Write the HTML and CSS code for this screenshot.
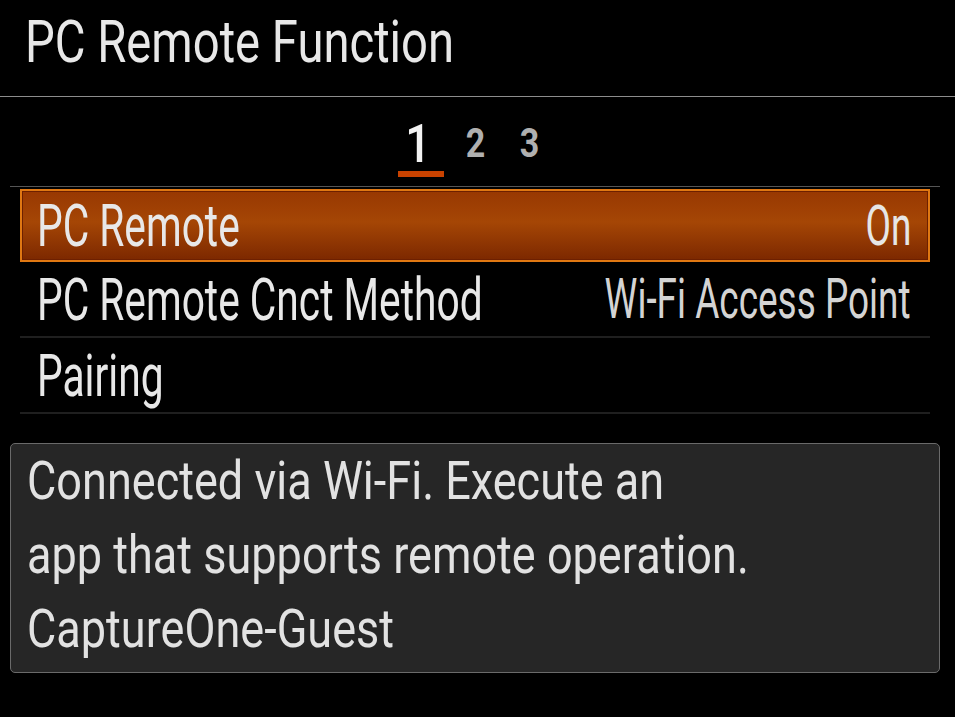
FILE: index.html
```html
<!DOCTYPE html>
<html>
<head>
    <title>PC Remote Function</title>
    <link rel="stylesheet" href="styles.css">
</head>
<body>
    <div class="screen">
        <div class="menu-header">
            <span class="txt title">PC Remote Function</span>
        </div>
        <div class="page-tabs">
            <span class="tab active"><span class="txt">1</span></span>
            <span class="tab"><span class="txt">2</span></span>
            <span class="tab"><span class="txt">3</span></span>
        </div>
        <div class="menu-list">
            <div class="menu-row selected">
                <span class="txt label">PC Remote</span>
                <span class="txt value">On</span>
            </div>
            <div class="menu-row">
                <span class="txt label">PC Remote Cnct Method</span>
                <span class="txt value">Wi-Fi Access Point</span>
            </div>
            <div class="menu-row">
                <span class="txt label">Pairing</span>
            </div>
        </div>
        <!-- Help text for the selected item -->
        <div class="info-box">
            <div class="info-line"><span class="txt">Connected via Wi-Fi. Execute an</span></div>
            <div class="info-line"><span class="txt">app that supports remote operation.</span></div>
            <div class="info-line"><span class="txt">CaptureOne-Guest</span></div>
        </div>
    </div>
</body>
</html>
```

FILE: styles.css
```css
/* Camera menu screen */
body {
    margin: 0;
    padding: 0;
    background-color: #000;
    font-family: Roboto, "Liberation Sans", sans-serif;
    color: #e8e8e8;
}

.screen {
    width: 955px;
    height: 717px;
    overflow: hidden;
    background-color: #000;
}

/* condensed look: the camera font is narrow */
.txt {
    display: inline-block;
    transform: scaleX(0.8);
    transform-origin: left center;
    white-space: nowrap;
}

.menu-header {
    height: 97px;
    border-bottom: 1px solid #8c8c8c;
    padding-left: 25px;
    box-sizing: border-box;
    display: flex;
    align-items: center;
    padding-bottom: 14px;
}

.title {
    font-size: 59px;
    line-height: 1;
}

.page-tabs {
    height: 89px;
    display: flex;
    justify-content: flex-start;
    align-items: flex-end;
    gap: 8px;
    padding-left: 398px;
    padding-bottom: 9px;
    box-sizing: border-box;
}

.tab {
    width: 46px;
    display: flex;
    justify-content: center;
    font-size: 40px;
    line-height: 1;
    font-weight: bold;
    color: #b0b0b0;
    padding-bottom: 13px;
}

.tab .txt {
    transform: scaleX(0.85);
    transform-origin: center center;
}

.tab.active {
    font-size: 53px;
    font-weight: 500;
    color: #f2f2f2;
    border-bottom: 6px solid #c84200;
    padding-bottom: 0;
    padding-right: 6px;
    box-sizing: border-box;
}

.menu-list {
    margin: 0 15px 0 10px;
    border-top: 1px solid #555;
    padding: 2px 10px 0 10px;
}

.menu-row {
    height: 76px;
    display: flex;
    align-items: center;
    border-bottom: 2px solid #1f1f1f;
    box-sizing: border-box;
    padding: 0 19px 0 17px;
    font-size: 59px;
    line-height: 1;
}

.menu-row.selected {
    height: 73px;
    border: 2px solid #e07812;
    box-shadow: inset 0 0 0 1px #6e2000;
    padding: 0 17px 0 15px;
    background: linear-gradient(#983802, #a54605 45%, #7c2800);
}

.label {
    flex: 0 1 auto;
    min-width: 0;
    transform: scaleX(0.69);
}

.value {
    flex: 0 0 auto;
    margin-left: auto;
    font-size: 56px;
    transform: scaleX(0.66);
    transform-origin: right center;
    color: #d4d4d4;
}

.selected .value {
    color: #e6e6e6;
}

.info-box {
    margin: 29px 15px 0 10px;
    height: 230px;
    box-sizing: border-box;
    background-color: #262626;
    border: 1px solid #6a6a6a;
    border-radius: 5px;
    padding: 0 16px;
}

.info-line {
    height: 74px;
    display: flex;
    align-items: center;
    font-size: 53px;
    line-height: 1;
    color: #e2e2e2;
}

.info-line .txt {
    transform: scaleX(0.85);
}
```
